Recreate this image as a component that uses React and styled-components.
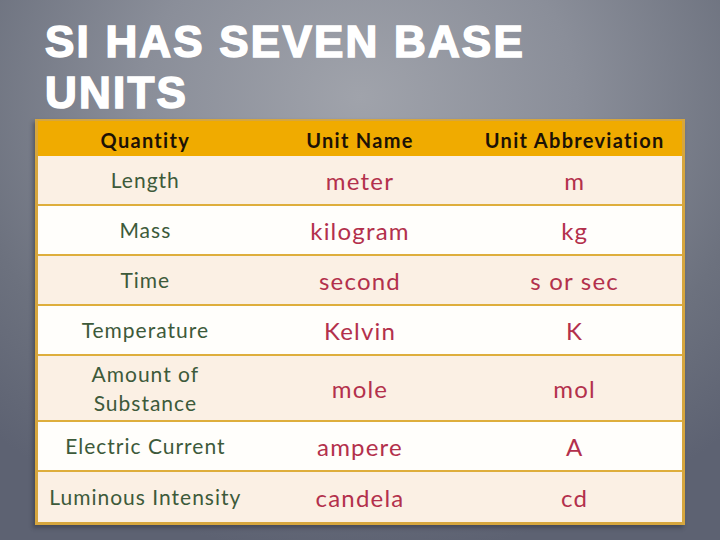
import React from "react";
import styled, { createGlobalStyle } from "styled-components";

const Global = createGlobalStyle`
  html, body { margin: 0; padding: 0; }
  body { width: 720px; height: 540px; overflow: hidden; }
`;

const Slide = styled.div`
  width: 720px;
  height: 540px;
  box-sizing: border-box;
  padding: 16px 35px 0 35px;
  display: flex;
  flex-direction: column;
  background: radial-gradient(ellipse 75% 85% at 50% 18%, #a0a3ab 0%, #8a8e99 40%, #6c717e 75%, #5d6272 100%);
`;

const Title = styled.h1`
  margin: 0 0 1px 10px;
  font-family: "Liberation Sans", Arial, sans-serif;
  font-weight: 700;
  font-size: 44px;
  line-height: 51px;
  letter-spacing: 2.2px;
  color: #ffffff;
  text-transform: uppercase;
  -webkit-text-stroke: 1.6px #ffffff;
  width: 530px;
`;

const Table = styled.div`
  width: 650px;
  box-sizing: border-box;
  border: 3px solid #d6a63e;
  box-shadow: inset 0 0 0 1px #f6d872, -2px 3px 4px rgba(40, 44, 56, 0.45);
  display: flex;
  flex-direction: column;
  font-family: Lato, "Open Sans", sans-serif;
`;

const Row = styled.div`
  display: grid;
  grid-template-columns: 1fr 1fr 1fr;
  box-sizing: border-box;
  height: ${(p) => p.$h}px;
  background: ${(p) => p.$bg};
  border-bottom: ${(p) => (p.$last ? "none" : "2px solid #deae3c")};
`;

const HeaderRow = styled(Row)`
  border-bottom: none;
  margin-top: -1px;
`;

const Cell = styled.div`
  display: flex;
  align-items: center;
  justify-content: center;
  text-align: center;
`;

const HeadCell = styled(Cell)`
  font-weight: 700;
  font-size: 20px;
  letter-spacing: 1.3px;
  color: #1c1206;
  padding-top: 2px;
`;

const QtyCell = styled(Cell)`
  font-size: 21px;
  letter-spacing: 1px;
  line-height: 29px;
  color: #3d5a3a;
  padding-bottom: 1px;
`;

const UnitCell = styled(Cell)`
  font-size: 24px;
  letter-spacing: 1.2px;
  color: #b3304c;
`;

const rows = [
  ["Length", "meter", "m", 50],
  ["Mass", "kilogram", "kg", 50],
  ["Time", "second", "s or sec", 50],
  ["Temperature", "Kelvin", "K", 50],
  [<>Amount of<br />Substance</>, "mole", "mol", 66],
  ["Electric Current", "ampere", "A", 50],
  ["Luminous Intensity", "candela", "cd", 50],
];

export default function App() {
  return (
    <>
      <Global />
      <Slide>
        <Title>SI has seven base units</Title>
        <Table>
          <HeaderRow $h={35} $bg="#f0ab00">
            <HeadCell>Quantity</HeadCell>
            <HeadCell>Unit Name</HeadCell>
            <HeadCell>Unit Abbreviation</HeadCell>
          </HeaderRow>
          {rows.map(([q, n, a, h], i) => (
            <Row
              key={i}
              $h={h}
              $bg={i % 2 === 0 ? "#fbf0e4" : "#fffefb"}
              $last={i === rows.length - 1}
            >
              <QtyCell>{q}</QtyCell>
              <UnitCell>{n}</UnitCell>
              <UnitCell>{a}</UnitCell>
            </Row>
          ))}
        </Table>
      </Slide>
    </>
  );
}
